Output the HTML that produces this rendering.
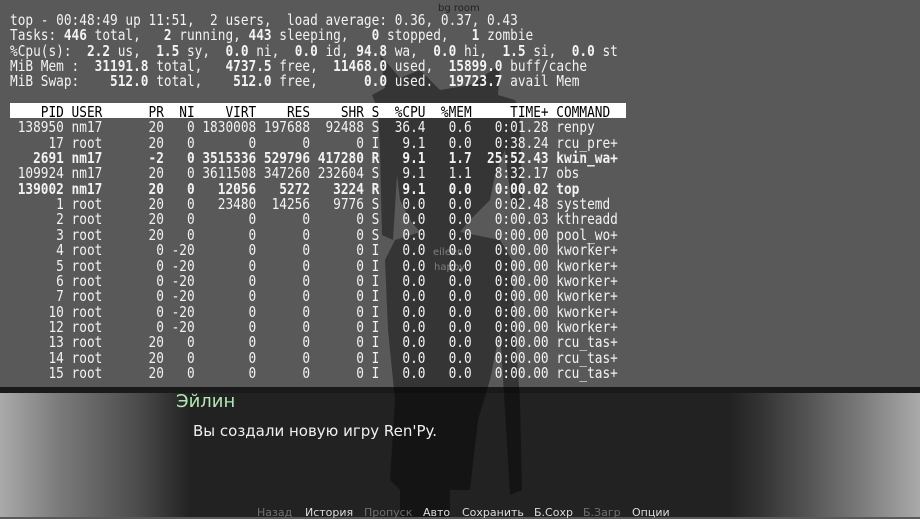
<!DOCTYPE html>
<html><head><meta charset="utf-8"><style>
html,body{margin:0;padding:0;}
body{width:920px;height:517px;position:relative;overflow:hidden;background:#595959;font-family:"DejaVu Sans","Liberation Sans",sans-serif;}
.dlg{position:absolute;left:0;top:387px;width:920px;height:130px;border-top:6px solid #1a1a1a;box-sizing:border-box;
background:linear-gradient(to right,#aaa 0px,#7a7a7a 60px,#4a4a4a 140px,#222 190px,#222 730px,#333 760px,#555 810px,#7a7a7a 860px,#aaa 920px);}
svg{position:absolute;left:0;top:0;}
pre{position:absolute;left:10px;margin:0;font-family:"DejaVu Sans Mono","Liberation Mono",monospace;font-size:15px;line-height:15.35px;color:#f2f2f2;transform:scaleX(0.852);transform-origin:0 0;white-space:pre;}
pre b{font-weight:bold;}
.hdr{position:absolute;left:10px;top:103px;width:616px;height:15px;background:#fff;}
.lbl{position:absolute;font-size:10px;}
.menu{position:absolute;top:506px;font-size:11px;color:#ddd;}
.menu.g{color:#707070;}
</style></head><body>
<div class="dlg"></div>
<div class="lbl" style="left:438px;top:3px;color:#222;">bg room</div>
<svg width="920" height="517"><path fill="rgba(0,0,0,0.4)" d="M372,95 L385,88 L380,55 L400,78 L420,70 L440,90 L470,85 L500,65 L498,95 L515,100 L520,110 L522,200 L512,210 L505,150 L495,175 L490,200 L470,220 L460,232 L500,240 L512,260 L515,330 L520,400 L522,490 L510,495 L505,410 L500,330 L490,380 L478,420 L470,490 L450,490 L450,517 L400,517 L400,490 L390,480 L395,400 L388,330 L385,260 L395,240 L420,232 L410,220 L400,200 L397,175 L393,240 L382,235 L380,150 L378,110 Z"/></svg>
<div class="lbl" style="left:433px;top:247px;color:#808080;">eileen</div>
<div class="lbl" style="left:434px;top:262px;color:#808080;">happy</div>
<div class="hdr"></div>
<pre style="top:13px;">top - 00:48:49 up 11:51,  2 users,  load average: 0.36, 0.37, 0.43
Tasks:<b> 446 </b>total,<b>   2 </b>running,<b> 443 </b>sleeping,<b>   0 </b>stopped,<b>   1 </b>zombie
%Cpu(s):<b>  2.2 </b>us,<b>  1.5 </b>sy,<b>  0.0 </b>ni,<b>  0.0 </b>id,<b> 94.8 </b>wa,<b>  0.0 </b>hi,<b>  1.5 </b>si,<b>  0.0 </b>st
MiB Mem :<b>  31191.8 </b>total,<b>   4737.5 </b>free,<b>  11468.0 </b>used,<b>  15899.0 </b>buff/cache
MiB Swap:<b>    512.0 </b>total,<b>    512.0 </b>free,<b>      0.0 </b>used.<b>  19723.7 </b>avail Mem

<span style="color:#000">    PID USER      PR  NI    VIRT    RES    SHR S  %CPU  %MEM     TIME+ COMMAND</span>
 138950 nm17      20   0 1830008 197688  92488 S  36.4   0.6   0:01.28 renpy
     17 root      20   0       0      0      0 I   9.1   0.0   0:38.24 rcu_pre+
<b>   2691 nm17      -2   0 3515336 529796 417280 R   9.1   1.7  25:52.43 kwin_wa+</b>
 109924 nm17      20   0 3611508 347260 232604 S   9.1   1.1   8:32.17 obs
<b> 139002 nm17      20   0   12056   5272   3224 R   9.1   0.0   0:00.02 top</b>
      1 root      20   0   23480  14256   9776 S   0.0   0.0   0:02.48 systemd
      2 root      20   0       0      0      0 S   0.0   0.0   0:00.03 kthreadd
      3 root      20   0       0      0      0 S   0.0   0.0   0:00.00 pool_wo+
      4 root       0 -20       0      0      0 I   0.0   0.0   0:00.00 kworker+
      5 root       0 -20       0      0      0 I   0.0   0.0   0:00.00 kworker+
      6 root       0 -20       0      0      0 I   0.0   0.0   0:00.00 kworker+
      7 root       0 -20       0      0      0 I   0.0   0.0   0:00.00 kworker+
     10 root       0 -20       0      0      0 I   0.0   0.0   0:00.00 kworker+
     12 root       0 -20       0      0      0 I   0.0   0.0   0:00.00 kworker+
     13 root      20   0       0      0      0 I   0.0   0.0   0:00.00 rcu_tas+
     14 root      20   0       0      0      0 I   0.0   0.0   0:00.00 rcu_tas+
     15 root      20   0       0      0      0 I   0.0   0.0   0:00.00 rcu_tas+</pre>
<div style="position:absolute;left:176px;top:391px;font-size:18px;color:#aee8ae;">Эйлин</div>
<div style="position:absolute;left:193px;top:422px;font-size:15px;color:#f0f0f0;">Вы создали новую игру Ren'Py.</div>
<div class="menu g" style="left:257px;">Назад</div>
<div class="menu" style="left:305px;">История</div>
<div class="menu g" style="left:364px;">Пропуск</div>
<div class="menu" style="left:423px;">Авто</div>
<div class="menu" style="left:462px;">Сохранить</div>
<div class="menu" style="left:534px;">Б.Сохр</div>
<div class="menu g" style="left:583px;">Б.Загр</div>
<div class="menu" style="left:632px;">Опции</div>
</body></html>
